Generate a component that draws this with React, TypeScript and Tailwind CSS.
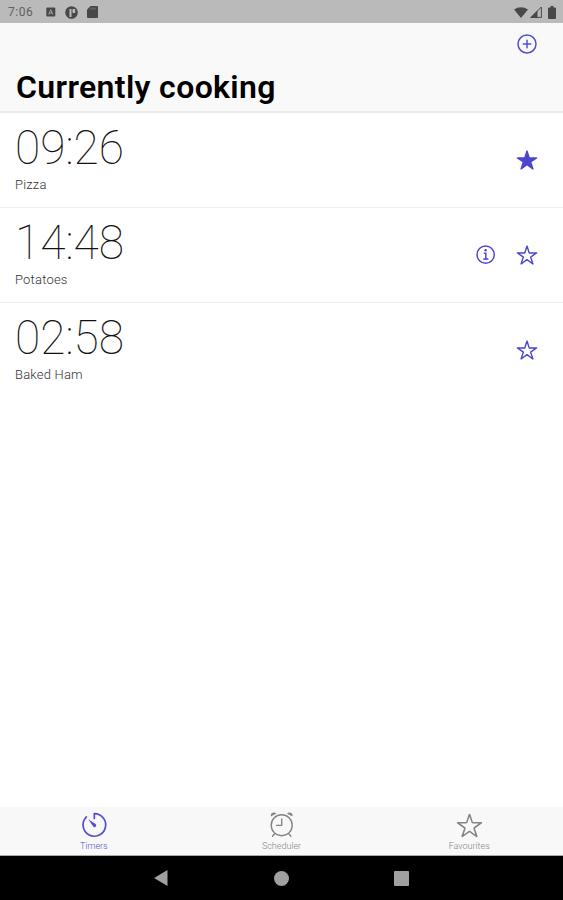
import { IoIosStarOutline } from "react-icons/io";
import {
  IoAddCircleOutline,
  IoInformationCircleOutline,
  IoStar,
  IoStarOutline,
} from "react-icons/io5";

const timers = [
  { time: "09:26", name: "Pizza", favourite: true, info: false },
  { time: "14:48", name: "Potatoes", favourite: false, info: true },
  { time: "02:58", name: "Baked Ham", favourite: false, info: false },
];

function TimerIcon() {
  return (
    <svg className="h-7 w-7" viewBox="0 0 28 28" fill="none" stroke="currentColor" strokeWidth="1.7">
      <path d="M14.3 7.5V2.6a11.3 11.3 0 1 1-7.9 3.3" strokeLinejoin="round" strokeLinecap="round" />
      <path d="M8.3 8.2 15.6 13.1q1.2 1.1.2 2.4t-2.4.2z" fill="currentColor" stroke="none" />
    </svg>
  );
}

function AlarmIcon() {
  return (
    <svg className="h-7 w-7" viewBox="0 0 28 28" fill="none" stroke="currentColor" strokeWidth="1.4" strokeLinecap="round">
      <circle cx="13.7" cy="14.2" r="10.5" />
      <path d="M13.7 8v6.4H8.6M6.6 22.7l-2.1 2.5M20.8 22.7l2.1 2.5" />
      <path d="M3 5.6Q2.2 2.6 4.7 1.7 6.8 1.2 8.5 2.5zM24.4 5.6q.8-3-1.7-3.9-2.1-.5-3.8.8z" fill="currentColor" stroke="none" />
    </svg>
  );
}

function StarIcon() {
  return (
    <span className="flex h-7 items-center">
      <IoIosStarOutline size={29} />
    </span>
  );
}

const tabs = [
  { label: "Timers", Icon: TimerIcon, active: true },
  { label: "Scheduler", Icon: AlarmIcon, active: false },
  { label: "Favourites", Icon: StarIcon, active: false },
];

function StatusBar() {
  return (
    <div className="flex h-[23px] shrink-0 items-center bg-[#bababa] pt-px pr-[7px] pl-2 text-[#484848]">
      <span className="w-[38px] text-[12px] tracking-[0.5px] text-[#606060]">7:06</span>
      <svg className="h-[10px] w-[10px]" viewBox="0 0 10 10">
        <rect x="0.3" y="0.5" width="9" height="9" rx="1" fill="currentColor" />
        <path d="M2.7 7.5 4.8 2.7 6.9 7.5M3.4 6h2.8" fill="none" stroke="#bababa" strokeWidth="0.8" />
      </svg>
      <svg className="ml-[9px] h-[13px] w-[13px]" viewBox="0 0 13 13">
        <circle cx="6.5" cy="6.5" r="6.3" fill="currentColor" />
        <path d="M4.5 3h2v8h-2zM7.5 3h2.7v4H7.5z" fill="#bababa" />
      </svg>
      <svg className="ml-[9px] h-3 w-[11px]" viewBox="0 0 11 12">
        <path d="M3.5 0H10q1 0 1 1v10q0 1-1 1H1q-1 0-1-1V3.5z" fill="currentColor" />
        <path d="M4 1.5v2M6 1.5v2M8 1.5v2" stroke="#888" strokeWidth="0.8" />
      </svg>
      <div className="ml-auto flex items-center gap-[2px]">
        <svg className="h-[11px] w-[14px]" viewBox="0 0 14 11">
          <path d="M0 2.5Q7-2 14 2.5L7 11z" fill="currentColor" />
        </svg>
        <svg className="h-3 w-3" viewBox="0 0 12 12">
          <path d="M11.4 1v10.4H1z" fill="none" stroke="currentColor" />
          <path d="M7.5 4.5V12H0z" fill="currentColor" />
        </svg>
        <svg className="ml-1 h-[13px] w-2" viewBox="0 0 8 13">
          <path d="M2.5 0h3v1.5H7q1 0 1 1V12q0 1-1 1H1q-1 0-1-1V2.5q0-1 1-1h1.5z" fill="currentColor" />
        </svg>
      </div>
    </div>
  );
}

export default function App() {
  return (
    <div className="flex h-[900px] w-full flex-col overflow-hidden bg-white font-['Roboto',sans-serif]">
      <StatusBar />

      <header className="flex h-[90px] shrink-0 flex-col border-b-2 border-[#ebebeb] bg-[#f9f9f9] pr-[24px] pl-4">
        <button className="mt-[9px] self-end text-[#554fd0]">
          <IoAddCircleOutline size={24} />
        </button>
        <h1 className="mt-3 text-[32px] leading-[38px] font-semibold tracking-[0.36px] text-black">
          Currently cooking
        </h1>
      </header>

      <main className="flex-1">
        {timers.map(({ time, name, favourite, info }) => (
          <div
            key={name}
            className="flex h-[95px] border-b border-[#f0f0f0] pt-[7px] pr-[25px] pl-[15px] last:border-0"
          >
            <div className="flex-1">
              <div className="origin-left scale-x-[0.94] text-[49px] leading-[56px] font-thin text-[#111]">
                {time}
              </div>
              <div className="text-[13px] leading-[18px] font-light tracking-[0.2px] text-[#333]">{name}</div>
            </div>
            <div className="mt-[28px] flex h-[24px] items-center gap-[18px] text-[#4c46cf]">
              {info && <IoInformationCircleOutline size={24} />}
              {favourite ? <IoStar size={22} /> : <IoStarOutline size={22} />}
            </div>
          </div>
        ))}
      </main>

      <nav className="flex h-[49px] shrink-0 border-b border-[#aaa] bg-[#f8f8f8]">
        {tabs.map(({ label, Icon, active }) => (
          <div
            key={label}
            className={`flex flex-1 flex-col items-center pt-1 ${active ? "text-[#554fd0]" : "text-[#858585]"}`}
          >
            <Icon />
            <span className="mt-[2px] text-[9px] leading-[10px] font-light">{label}</span>
          </div>
        ))}
      </nav>

      {/* Android navigation buttons */}
      <div className="flex h-11 shrink-0 items-center justify-center gap-[105px] bg-black text-[#a0a0a0]">
        <svg className="h-4 w-[15px]" viewBox="0 0 15 16">
          <path d="M13.5 0v16L0 8z" fill="currentColor" />
        </svg>
        <div className="h-[15px] w-[15px] rounded-full bg-[#a0a0a0]" />
        <div className="h-[15px] w-[15px] rounded-[1px] bg-[#a0a0a0]" />
      </div>
    </div>
  );
}
